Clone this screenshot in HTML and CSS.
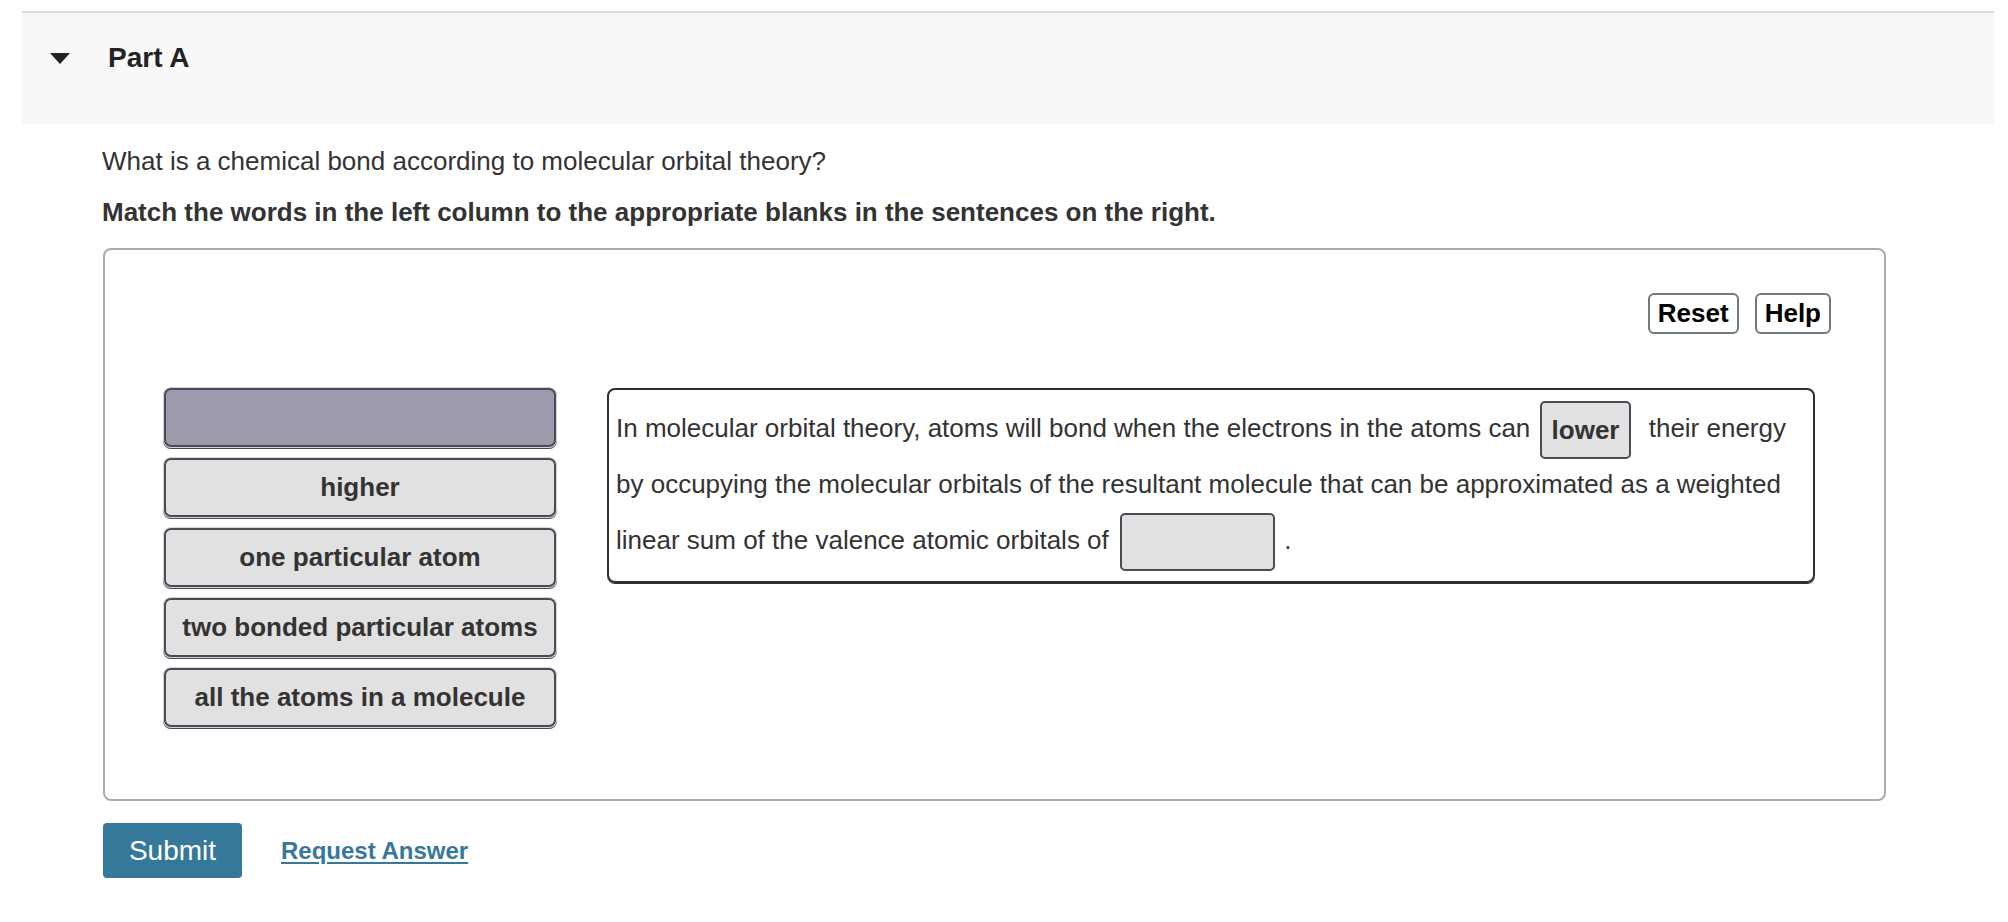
FILE: index.html
```html
<!DOCTYPE html>
<html lang="en">
<head>
<meta charset="utf-8">
<title>Part A</title>
<link rel="stylesheet" href="styles.css">
</head>
<body>
<div class="page">
  <div class="part-header">
    <svg class="caret" width="20" height="11" viewBox="0 0 20 11" aria-hidden="true"><polygon points="0,0 20,0 10,11" fill="#222"/></svg>
    <h2 class="part-title">Part A</h2>
  </div>
  <div class="part-body">
    <p class="question">What is a chemical bond according to molecular orbital theory?</p>
    <p class="instruction">Match the words in the left column to the appropriate blanks in the sentences on the right.</p>
    <div class="activity">
      <div class="toolbar">
        <button class="tool-btn">Reset</button>
        <button class="tool-btn">Help</button>
      </div>
      <div class="workspace">
        <div class="word-bank">
          <div class="word placeholder"></div>
          <div class="word">higher</div>
          <div class="word">one particular atom</div>
          <div class="word">two bonded particular atoms</div>
          <div class="word">all the atoms in a molecule</div>
        </div>
        <div class="sentence">In molecular orbital theory, atoms will bond when the electrons in the atoms can <span class="drop filled">lower</span> their energy by occupying the molecular orbitals of the resultant molecule that can be approximated as a weighted linear sum of the valence atomic orbitals of <span class="drop empty"></span> .</div>
      </div>
    </div>
    <div class="actions">
      <button class="submit">Submit</button>
      <a class="request" href="#">Request Answer</a>
    </div>
  </div>
</div>
</body>
</html>
```

FILE: styles.css
```css
html, body {
  margin: 0;
  padding: 0;
  background: #fff;
}

body {
  font-family: "Liberation Sans", Arial, Helvetica, sans-serif;
  font-size: 26px;
  color: #333;
}

.page {
  margin: 11px 14px 0 22px;
}

.part-header {
  border-top: 2px solid #dcdcdc;
  background: #f8f8f8;
  height: 113px;
  box-sizing: border-box;
  padding: 28px 0 0 28px;
  display: flex;
  align-items: flex-start;
}

.caret {
  display: block;
  margin-top: 12px;
  flex: none;
}

.part-title {
  margin: 0 0 0 38px;
  font-size: 28px;
  line-height: 34px;
  font-weight: bold;
  color: #222;
}

.part-body {
  padding-left: 81px;
}

.question {
  margin: 19px 0 0 -1px;
  line-height: 36px;
}

.instruction {
  margin: 15px 0 0 -1px;
  line-height: 36px;
  font-weight: bold;
}

.activity {
  margin-top: 18px;
  width: 1783px;
  height: 553px;
  box-sizing: border-box;
  border: 2px solid #ababab;
  border-radius: 8px;
  padding: 43px 53px 0 59px;
}

.toolbar {
  display: flex;
  justify-content: flex-end;
  gap: 16px;
}

.tool-btn {
  font-family: inherit;
  font-size: 26px;
  font-weight: bold;
  color: #000;
  background: #fff;
  border: 2px solid #6f7b80;
  border-radius: 6px;
  height: 41px;
  line-height: 37px;
  padding: 0 8px;
  margin: 0;
}

.workspace {
  margin-top: 54px;
  display: flex;
  align-items: flex-start;
  gap: 51px;
}

.word-bank {
  width: 392px;
  display: flex;
  flex-direction: column;
  gap: 11px;
  flex: none;
}

.word {
  height: 59px;
  box-sizing: border-box;
  border: 2px solid #4b4b57;
  border-radius: 7px;
  background: #e1e1e1;
  box-shadow: 0 0 0 1px #d4d4dc, 0 1px 0 1px #4b4b57;
  text-align: center;
  font-weight: bold;
  line-height: 55px;
  color: #333;
}

.word.placeholder {
  background: #9c9aab;
}

.sentence {
  width: 1208px;
  box-sizing: border-box;
  flex: none;
  border: 2px solid #2b3137;
  border-radius: 8px;
  box-shadow: 0 1px 0 #2b3137;
  padding: 10px 7px 13px 7px;
  line-height: 56px;
  color: #333;
}

.drop {
  display: inline-block;
  box-sizing: border-box;
  height: 58px;
  vertical-align: middle;
  border: 2px solid #4b4b57;
  border-radius: 5px;
  background: #e1e1e1;
  margin-top: -3px;
  margin-bottom: -3px;
}

.drop.filled {
  font-weight: bold;
  line-height: 54px;
  padding: 0 10px;
  margin-left: 2px;
  margin-right: 10px;
}

.drop.empty {
  width: 155px;
  margin-left: 4px;
  margin-right: 2px;
}

.actions {
  margin-top: 22px;
  display: flex;
  align-items: center;
  gap: 39px;
}

.submit {
  font-family: inherit;
  font-size: 28px;
  color: #fff;
  background: #367899;
  border: none;
  border-radius: 4px;
  height: 55px;
  width: 139px;
  padding: 0;
  margin: 0;
}

.request {
  font-size: 24px;
  font-weight: bold;
  color: #367899;
  text-decoration: underline;
  text-underline-offset: 3px;
  text-decoration-thickness: 2px;
}
```
